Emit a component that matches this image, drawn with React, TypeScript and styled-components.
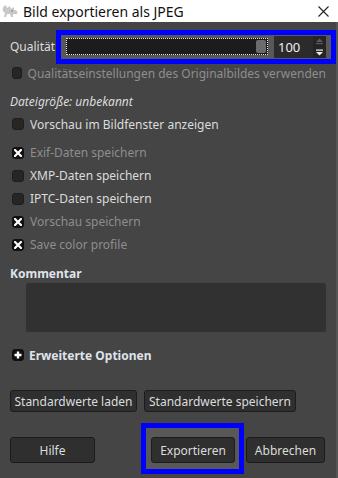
import React from 'react';
import styled, { createGlobalStyle } from 'styled-components';

const GlobalStyle = createGlobalStyle`
  body {
    margin: 0;
    background: #454545;
    font-family: "Noto Sans", "Open Sans", sans-serif;
  }
`;

const Window = styled.div`
  width: 338px;
  height: 478px;
  display: flex;
  flex-direction: column;
  overflow: hidden;
`;

const TitleBar = styled.div`
  height: 22px;
  background: #ffffff;
  display: flex;
  align-items: center;
  padding: 0 9px 0 2px;
  color: #111;
  font-size: 14px;
  gap: 4px;
`;

const TitleText = styled.span`
  flex: 1;
`;

const Body = styled.div`
  flex: 1;
  background: #454545;
  padding: 0 10px;
  display: flex;
  flex-direction: column;
  color: #dcdcdc;
  font-size: 12px;
  border-right: 2px solid #555;
`;

const QualityRow = styled.div`
  margin-top: 8px;
  height: 33px;
  display: flex;
  align-items: center;
`;

const QualityLabel = styled.span`
  width: 46px;
`;

const FocusBox = styled.div`
  border: 5px solid #0000ff;
  background: #585858;
  box-sizing: border-box;
`;

const QualityBox = styled(FocusBox)`
  flex: 1;
  margin-right: -10px;
  height: 34px;
  display: flex;
  align-items: center;
  padding: 0 5px;
  gap: 6px;
`;

const Slider = styled.div`
  position: relative;
  flex: 1;
  height: 17px;
  background: #1c1c1c;
  border: 1px dotted #e6e6e6;
  box-sizing: border-box;
`;

const Thumb = styled.div`
  position: absolute;
  right: 1px;
  top: 1px;
  width: 10px;
  height: 13px;
  border-radius: 2px;
  background: #6b6b6b;
`;

const Spin = styled.div`
  width: 52px;
  height: 22px;
  display: flex;
  background: #2b2b2b;
`;

const SpinValue = styled.span`
  flex: 1;
  padding-left: 4px;
  font-size: 13px;
  line-height: 22px;
  color: #f0f0f0;
`;

const SpinArrows = styled.div`
  width: 13px;
  display: flex;
  flex-direction: column;
  justify-content: space-around;
  align-items: center;
  background: #242424;
`;

const CheckRow = styled.div<{ $gap?: number; $h?: number }>`
  height: ${(p) => p.$h ?? 23}px;
  margin-top: ${(p) => p.$gap ?? 0}px;
  display: flex;
  align-items: center;
  gap: 6px;
  padding-left: 2px;
`;

const Box = styled.span<{ $checked?: boolean }>`
  width: 12px;
  height: 12px;
  border-radius: 3px;
  box-sizing: border-box;
  background: ${(p) => (p.$checked ? '#101010' : '#262626')};
  border: 1px solid ${(p) => (p.$checked ? '#101010' : '#1e1e1e')};
  display: flex;
  align-items: center;
  justify-content: center;
`;

const Label = styled.span<{ $disabled?: boolean }>`
  color: ${(p) => (p.$disabled ? '#8e8e8e' : '#dcdcdc')};
  white-space: nowrap;
`;

const InfoText = styled.div`
  height: 22px;
  margin-top: 7px;
  line-height: 22px;
  font-style: italic;
`;

const Heading = styled.div<{ $gap: number }>`
  margin-top: ${(p) => p.$gap}px;
  font-weight: bold;
  color: #dfe3ea;
  height: 17px;
  line-height: 17px;
`;

const CommentArea = styled.div`
  margin: 1px 0 0 16px;
  width: 300px;
  height: 49px;
  background: #313131;
  border-radius: 2px;
`;

const ExpanderRow = styled.div`
  margin-top: 12px;
  height: 22px;
  display: flex;
  align-items: center;
  gap: 5px;
  padding-left: 2px;
  font-weight: bold;
  color: #dfe3ea;
`;

const ButtonRow = styled.div<{ $gap: number }>`
  margin-top: ${(p) => p.$gap}px;
  display: flex;
  align-items: flex-start;
`;

const Button = styled.div<{ $w: number; $h?: number; $top?: number; $left?: number }>`
  width: ${(p) => p.$w}px;
  height: ${(p) => p.$h ?? 22}px;
  margin-top: ${(p) => p.$top ?? 0}px;
  margin-left: ${(p) => p.$left ?? 0}px;
  box-sizing: border-box;
  background: #2f2f2f;
  border: 1px solid #1c1c1c;
  border-radius: 3px;
  display: flex;
  align-items: center;
  justify-content: center;
  color: #dcdcdc;
  white-space: nowrap;
`;

const ExportFocus = styled(FocusBox)`
  margin-left: 46px;
  padding: 9px 4px 6px 5px;
`;

const Cross = () => (
  <svg width="8" height="8" viewBox="0 0 8 8">
    <path d="M1 1L7 7M7 1L1 7" stroke="#fff" strokeWidth="2.2" strokeLinecap="square" />
  </svg>
);

const Check: React.FC<{ checked?: boolean; disabled?: boolean; label: string; gap?: number; h?: number }> = ({
  checked,
  disabled,
  label,
  gap,
  h,
}) => (
  <CheckRow $gap={gap} $h={h}>
    <Box $checked={checked}>{checked && <Cross />}</Box>
    <Label $disabled={disabled}>{label}</Label>
  </CheckRow>
);

const Wilber = () => (
  <svg width="17" height="14" viewBox="0 0 17 14">
    <path
      d="M1 3 L4 1 L5 4 L8 2 L9 5 L12 3 L12 6 C15 6 16 8 15 10 L11 10 L11 13 L9 13 L8 10 L5 10 L4 13 L2 13 L3 9 C1 8 0 6 1 3 Z"
      fill="#c8c8c8"
    />
    <circle cx="10" cy="7" r="1" fill="#9a9a9a" />
  </svg>
);

const App: React.FC = () => {
  return (
    <Window>
      <GlobalStyle />
      <TitleBar>
        <Wilber />
        <TitleText>Bild exportieren als JPEG</TitleText>
        <svg width="11" height="11" viewBox="0 0 11 11">
          <path d="M0.5 0.5L10.5 10.5M10.5 0.5L0.5 10.5" stroke="#222" strokeWidth="1.1" />
        </svg>
      </TitleBar>
      <Body>
        <QualityRow>
          <QualityLabel>Qualität</QualityLabel>
          <QualityBox>
            <Slider>
              <Thumb />
            </Slider>
            <Spin>
              <SpinValue>100</SpinValue>
              <SpinArrows>
                <svg width="9" height="7" viewBox="0 0 9 7">
                  <path d="M4.5 0.5L8 4H1Z" fill="#5a5a5a" />
                  <rect x="1" y="5" width="7" height="1.2" fill="#5a5a5a" />
                </svg>
                <svg width="9" height="7" viewBox="0 0 9 7">
                  <rect x="1" y="0.5" width="7" height="1.2" fill="#eee" />
                  <path d="M1 3H8L4.5 6.5Z" fill="#eee" />
                </svg>
              </SpinArrows>
            </Spin>
          </QualityBox>
        </QualityRow>
        <Check label="Qualitätseinstellungen des Originalbildes verwenden" disabled h={22} gap={-1} />
        <InfoText>Dateigröße: unbekannt</InfoText>
        <Check label="Vorschau im Bildfenster anzeigen" h={22} />
        <Check label="Exif-Daten speichern" checked disabled gap={6} />
        <Check label="XMP-Daten speichern" />
        <Check label="IPTC-Daten speichern" />
        <Check label="Vorschau speichern" checked disabled />
        <Check label="Save color profile" checked disabled />
        <Heading $gap={9}>Kommentar</Heading>
        <CommentArea />
        <ExpanderRow>
          <Box $checked>
            <svg width="8" height="8" viewBox="0 0 8 8">
              <path d="M4 0.5V7.5M0.5 4H7.5" stroke="#fff" strokeWidth="2.4" />
            </svg>
          </Box>
          Erweiterte Optionen
        </ExpanderRow>
        <ButtonRow $gap={24}>
          <Button $w={127}>Standardwerte laden</Button>
          <Button $w={152} $left={7}>
            Standardwerte speichern
          </Button>
        </ButtonRow>
        <ButtonRow $gap={11}>
          <Button $w={85} $h={26} $top={14}>
            Hilfe
          </Button>
          <ExportFocus>
            <Button $w={84} $h={26}>
              Exportieren
            </Button>
          </ExportFocus>
          <Button $w={79} $h={26} $top={14} $left={2}>
            Abbrechen
          </Button>
        </ButtonRow>
      </Body>
    </Window>
  );
};

export default App;
